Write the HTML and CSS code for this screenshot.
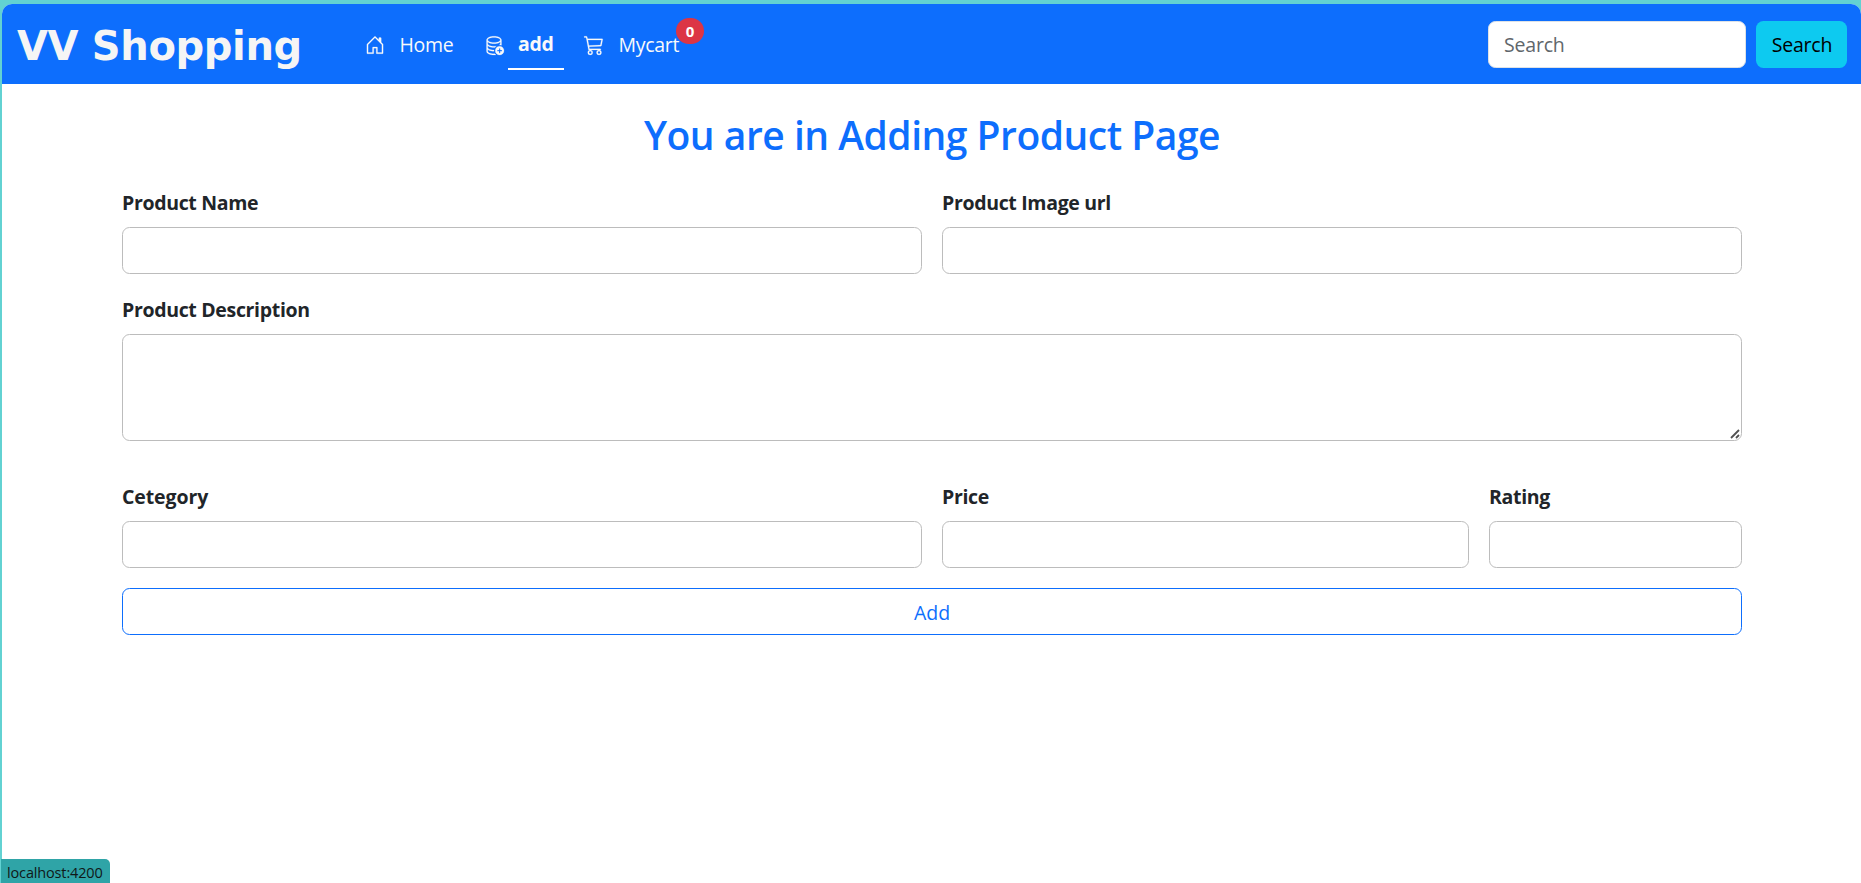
FILE: index.html
```html
<!DOCTYPE html>
<html lang="en">
<head>
<meta charset="utf-8">
<title>VV Shopping</title>
<link rel="stylesheet" href="styles.css">
</head>
<body>
<div class="page">
  <nav class="navbar">
    <a class="brand">VV Shopping</a>
    <div class="links">
      <a class="link home"><svg class="icon" viewBox="0 0 16 16"><path d="M8.354 1.146a.5.5 0 0 0-.708 0l-6 6A.5.5 0 0 0 1.5 7.5v7a.5.5 0 0 0 .5.5h4.5a.5.5 0 0 0 .5-.5v-4h2v4a.5.5 0 0 0 .5.5H14a.5.5 0 0 0 .5-.5v-7a.5.5 0 0 0-.146-.354L13 5.793V2.500a.5.5 0 0 0-.5-.5h-1a.5.5 0 0 0-.5.5v1.293zM2.500 14V7.707l5.500-5.500 5.500 5.500V14H10v-4a.5.5 0 0 0-.5-.5h-3a.5.5 0 0 0-.5.5v4z"/></svg><span class="text">Home</span></a>
      <a class="link add"><svg class="icon" viewBox="0 0 16 16"><path d="M12.500 16a3.500 3.500 0 1 0 0-7 3.500 3.500 0 0 0 0 7m.5-5v1h1a.5.5 0 0 1 0 1h-1v1a.5.5 0 0 1-1 0v-1h-1a.5.5 0 0 1 0-1h1v-1a.5.5 0 0 1 1 0"/><path d="M12.096 6.223A5 5 0 0 0 13 5.698V7c0 .289-.213.654-.753 1.007a4.500 4.500 0 0 1 1.753.25V4c0-1.007-.875-1.755-1.904-2.223C11.022 1.289 9.573 1 8 1s-3.022.289-4.096.777C2.875 2.245 2 2.993 2 4v9c0 1.007.875 1.755 1.904 2.223C4.978 15.710 6.427 16 8 16c.536 0 1.058-.034 1.555-.097a4.500 4.500 0 0 1-.813-.927Q8.378 15 8 15c-1.464 0-2.766-.27-3.682-.687C3.356 13.875 3 13.373 3 13v-1.302c.271.202.58.378.904.525C4.978 12.710 6.427 13 8 13h.027a4.600 4.600 0 0 1 0-1H8c-1.464 0-2.766-.27-3.682-.687C3.356 10.875 3 10.373 3 10V8.698c.271.202.58.378.904.525C4.978 9.710 6.427 10 8 10q.393 0 .774-.024a4.500 4.500 0 0 1 1.102-1.132C9.298 8.944 8.666 9 8 9c-1.464 0-2.766-.27-3.682-.687C3.356 7.875 3 7.373 3 7V5.698c.271.202.58.378.904.525C4.978 6.711 6.427 7 8 7s3.022-.289 4.096-.777M3 4c0-.374.356-.875 1.318-1.313C5.234 2.271 6.536 2 8 2s2.766.27 3.682.687C12.644 3.125 13 3.627 13 4c0 .374-.356.875-1.318 1.313C10.766 5.729 9.464 6 8 6s-2.766-.27-3.682-.687C3.356 4.875 3 4.373 3 4"/></svg><span class="active"><span class="text">add</span></span></a>
      <a class="link cart"><svg class="icon" viewBox="0 0 16 16"><path d="M0 1.500A.5.5 0 0 1 .5 1H2a.5.5 0 0 1 .485.379L2.890 3H14.500a.5.5 0 0 1 .49.598l-1 5a.5.5 0 0 1-.465.401l-9.397.472L4.415 11H13a.5.5 0 0 1 0 1H4a.5.5 0 0 1-.491-.408L2.010 3.607 1.610 2H.5a.5.5 0 0 1-.5-.5M3.102 4l.84 4.479 9.144-.459L13.890 4zM5 12a2 2 0 1 0 0 4 2 2 0 0 0 0-4m7 0a2 2 0 1 0 0 4 2 2 0 0 0 0-4m-7 1a1 1 0 1 1 0 2 1 1 0 0 1 0-2m7 0a1 1 0 1 1 0 2 1 1 0 0 1 0-2"/></svg><span class="text">Mycart</span><span class="badge">0</span></a>
    </div>
    <form class="search">
      <input class="search-input" placeholder="Search">
      <button class="search-button" type="button">Search</button>
    </form>
  </nav>
  <main class="content">
    <h1 class="title"><span>You are in Adding Product Page</span></h1>
    <form class="product-form">
      <label class="field name"><span class="label">Product Name</span><input class="control"></label>
      <label class="field image"><span class="label">Product Image url</span><input class="control"></label>
      <label class="field description"><span class="label">Product Description</span><textarea class="control area"></textarea><svg class="grip" viewBox="0 0 10 10"><path d="M1 9L9 1M6 9L9 6"/></svg></label>
      <label class="field category"><span class="label wide">Cetegory</span><input class="control"></label>
      <label class="field price"><span class="label">Price</span><input class="control"></label>
      <label class="field rating"><span class="label">Rating</span><input class="control"></label>
      <button class="submit" type="button">Add</button>
    </form>
  </main>
  <div class="status">localhost:4200</div>
</div>
</body>
</html>
```
FILE: styles.css
```css
* { box-sizing: border-box; }
body {
  margin: 0;
  height: 883px;
  padding: 4px 0 0 2px;
  overflow: hidden;
  background: #62d2d2;
  font-family: "Open Sans", "Noto Sans", sans-serif;
  font-size: 19.5px;
  line-height: 30px;
  color: #212529;
}
input, textarea, button { font: inherit; letter-spacing: inherit; margin: 0; }
.page { height: 879px; background: #fff; border-radius: 10px 10px 0 0; overflow: hidden; }
.navbar {
  display: flex;
  align-items: center;
  height: 80px;
  padding: 0 14px 0 15px;
  background: #0d6efd;
}
.brand {
  width: 348px;
  padding-top: 3px;
  font: bold 40px/60px "DejaVu Sans", sans-serif;
  letter-spacing: -0.35px;
  color: #f5f5f5;
  white-space: nowrap;
}
.links { display: flex; flex: 1; padding-top: 2px; color: #f8f9fa; letter-spacing: -0.3px; }
.link { display: flex; align-items: center; height: 50px; white-space: nowrap; }
.home { width: 119px; }
.add { width: 100px; }
.cart { position: relative; }
.icon { width: 20px; height: 20px; margin-right: 14.5px; fill: currentColor; stroke: currentColor; stroke-width: 0.15; overflow: visible; }
.add .icon { margin-right: 4px; }
.active {
  width: 56px;
  height: 50px;
  padding: 9px 10px 0;
  border-bottom: 2px solid #fff;
  font-weight: 700;
}
.badge {
  position: absolute;
  left: 92px;
  top: -2px;
  width: 28px;
  height: 26px;
  border-radius: 13px;
  background: #dc3545;
  color: #fff;
  font-size: 15px;
  font-weight: 700;
  line-height: 26px;
  letter-spacing: 0;
  text-align: center;
}
.search { display: flex; gap: 10px; letter-spacing: -0.2px; }
.search-input {
  width: 258px;
  height: 47px;
  padding: 1px 15px 0;
  border: 1px solid #dee2e6;
  border-radius: 7.5px;
  background: #fff;
}
.search-input::placeholder { color: #60666b; opacity: 1; }
.search-button {
  width: 91px;
  height: 47px;
  padding: 2px 0 0 1px;
  border: 0;
  border-radius: 7.5px;
  background: #0dcaf0;
  color: #000;
}
.content { padding: 26px 119px 0 120px; }
.title {
  margin: 0 0 29px;
  font-size: 39px;
  font-weight: 600;
  line-height: 49px;
  height: 48px;
  letter-spacing: -0.48px;
  text-align: center;
  color: #0d6efd;
}
.product-form {
  display: grid;
  grid-template-columns: 800px 527px 253px;
  column-gap: 20px;
}
.field { display: flex; flex-direction: column; }
.label { height: 40px; font-weight: 700; letter-spacing: -0.33px; line-height: 32px; }
.wide { letter-spacing: -0.1px; }
.control {
  width: 100%;
  height: 47px;
  padding: 0 15px;
  border: 1px solid #bcbcbc;
  border-radius: 7.5px;
  background: #fff;
}
.image { grid-column: 2 / 4; }
.description { position: relative; grid-column: 1 / 4; margin-top: 20px; }
.area { height: 107px; resize: none; }
.grip {
  position: absolute;
  right: 2px;
  bottom: 2px;
  width: 10px;
  height: 10px;
  fill: none;
  stroke: #505050;
  stroke-width: 1.8;
}
.category, .price, .rating { margin-top: 40px; }
.submit {
  grid-column: 1 / 4;
  height: 47px;
  padding: 2px 0 0;
  margin-top: 20px;
  border: 1px solid #0d6efd;
  border-radius: 7.5px;
  background: #fff;
  color: #0d6efd;
}
.status {
  position: absolute;
  left: 1px;
  bottom: 0;
  width: 109px;
  height: 24px;
  padding-left: 6px;
  border-radius: 0 5px 0 0;
  background: #2fa4a7;
  color: #101818;
  font-size: 14.5px;
  line-height: 27px;
  letter-spacing: -0.15px;
}
```
